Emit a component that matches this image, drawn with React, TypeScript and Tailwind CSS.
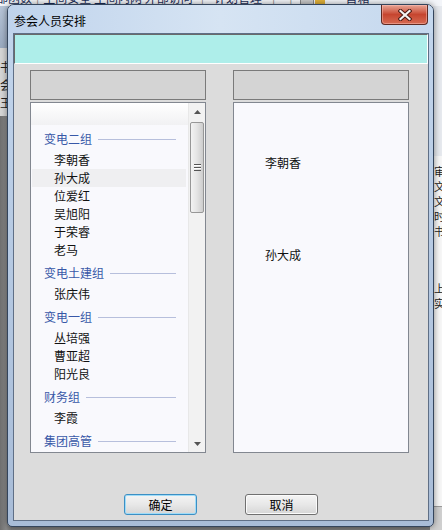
import React from "react";

function Group({ name }: { name: string }) {
  return (
    <div className="h-[26px] shrink-0 flex items-center pt-[2px] pl-[13px] pr-[12px]">
      <span className="text-[#3858a8] whitespace-nowrap">{name}</span>
      <div className="ml-[6px] flex-1 h-px bg-[#b7bfdc]" />
    </div>
  );
}

function Item({ name, hl }: { name: string; hl?: boolean }) {
  return (
    <div
      className={
        "h-[18px] shrink-0 flex items-center ml-[1px] mr-[2px] pl-[22px] text-[#111] " +
        (hl ? "bg-[#efeff1]" : "")
      }
    >
      {name}
    </div>
  );
}

function Arrow({ down }: { down?: boolean }) {
  return (
    <div className="h-[17px] shrink-0 flex items-center justify-center">
      <svg width="7" height="4" viewBox="0 0 7 4">
        {down ? (
          <path d="M0 0 H7 L3.5 4 Z" fill="#555" />
        ) : (
          <path d="M0 4 H7 L3.5 0 Z" fill="#555" />
        )}
      </svg>
    </div>
  );
}

function Scrollbar() {
  return (
    <div className="w-[17px] shrink-0 flex flex-col bg-[#f2f2f2] border-l border-[#e8e8e8]">
      <Arrow />
      <div className="mt-[2px] mx-[1px] h-[91px] rounded-[2px] border border-[#979797] bg-gradient-to-r from-[#f3f3f3] via-[#e4e4e4] to-[#cdcdcd] flex items-center justify-center">
        <svg width="7" height="7" viewBox="0 0 7 7">
          <rect x="0" y="0" width="7" height="1" fill="#555" />
          <rect x="0" y="1" width="7" height="1" fill="#fff" />
          <rect x="0" y="3" width="7" height="1" fill="#555" />
          <rect x="0" y="4" width="7" height="1" fill="#fff" />
          <rect x="0" y="6" width="7" height="1" fill="#555" />
        </svg>
      </div>
      <div className="flex-1" />
      <Arrow down />
    </div>
  );
}

function CloseButton() {
  return (
    <div className="mr-[5px] w-[47px] h-[20px] rounded-b-[4px] border border-t-0 border-[#5e2a22] bg-gradient-to-b from-[#e7a495] via-[#c6452f] to-[#d66a52] flex items-center justify-center shadow-[inset_0_0_0_1px_rgba(255,200,190,0.45)]">
      <svg width="14" height="12" viewBox="0 0 14 12">
        <path d="M2.5 2 L11.5 10 M11.5 2 L2.5 10" stroke="#4a1a14" strokeWidth="4.2" strokeLinecap="square" />
        <path d="M2.5 2 L11.5 10 M11.5 2 L2.5 10" stroke="#f4f4f4" strokeWidth="2.2" strokeLinecap="square" />
      </svg>
    </div>
  );
}

function Background() {
  return (
    <>
      <div className="absolute left-0 top-0 w-[442px] h-[6px] overflow-hidden bg-[#f3f5f9]">
        <div className="flex items-start whitespace-nowrap -mt-[9px] text-[12px] leading-[14px] text-[#1d2f5a]">
          <span className="-ml-[4px]">部函数</span>
          <span className="ml-[4px] text-[#888]">|</span>
          <span className="ml-[4px]">生间安全 生间内网 外部访问</span>
          <span className="ml-[8px] text-[#888]">|</span>
          <span className="ml-[10px]">计划管理</span>
          <span className="ml-[10px] text-[#888]">|</span>
          <span className="ml-[14px] text-[#888]">|</span>
          <span className="ml-[8px] w-[14px] h-[14px] bg-[#c9c9c9] border border-[#888]" />
          <span className="ml-[1px] w-[10px] h-[14px] bg-[#e2b23a]" />
          <span className="ml-[20px]">首箱</span>
        </div>
      </div>
      <div className="absolute left-0 top-[6px] w-[12px] h-[524px] flex flex-col">
        <div className="h-[42px] bg-gradient-to-b from-[#b7c5d8] to-[#9aaac0]" />
        <div className="h-[68px] bg-[#d6d6d6] flex flex-col pt-[10px] text-[12px] leading-[18px] text-[#222]">
          <span>书</span>
          <span>会</span>
          <span>王</span>
        </div>
        <div className="flex-1 bg-gradient-to-r from-[#6f6f6f] via-[#8a8a8a] to-[#777]" />
      </div>
      <div className="absolute right-0 top-[6px] w-[12px] h-[524px] flex flex-col bg-[#f6f6f6]">
        <div className="h-[150px] bg-[#e6e9ee]" />
        <div className="flex flex-col pl-[4px] pt-[8px] text-[11px] leading-[15px] text-[#222]">
          <span>审</span>
          <span>文</span>
          <span>文</span>
          <span>时</span>
          <span>书</span>
          <span className="mt-[42px]">上</span>
          <span>实</span>
        </div>
        <div className="flex-1" />
        <div className="h-[24px] bg-[#cfcfcf] border-t border-[#9a9a9a]" />
      </div>
    </>
  );
}

export default function App() {
  return (
    <div className="relative w-[442px] h-[530px] overflow-hidden bg-[#7b7b7b] font-['Noto_Sans_CJK_SC',sans-serif] text-[12px] leading-[16px]">
      <Background />
      <div className="absolute left-[7px] top-[4px] w-[427px] h-[523px] rounded-t-[7px] rounded-b-[5px] border border-[#34455c] bg-gradient-to-b from-[#c3d6ed] to-[#a8bcd7] shadow-[0_0_6px_rgba(0,0,0,0.45)] flex flex-col">
        <div className="h-[28px] shrink-0 flex items-start justify-between bg-gradient-to-r from-[#bfd3ec] via-[#d6e4f3] to-[#c5d8ee] rounded-t-[6px]">
          <span className="ml-[6px] mt-[8px] text-black">参会人员安排</span>
          <CloseButton />
        </div>
        <div className="ml-[5px] w-[416px] h-[488px] shrink-0 border border-[#5f6f86] bg-[#dcdcdc] flex flex-col">
          <div className="h-[30px] shrink-0 border border-[#6a6a6a] border-b-white border-r-white bg-[#aeeeea]" />
          <div className="mt-[6px] flex pl-[16px] gap-[27px]">
            <div className="w-[176px] flex flex-col">
              <div className="h-[30px] border border-[#7a7a7a] bg-[#d4d4d4]" />
              <div className="mt-[2px] h-[351px] border border-[#828790] bg-[#f9f9fd] flex overflow-hidden">
                <div className="flex-1 flex flex-col overflow-hidden">
                  <div className="h-[22px] shrink-0 bg-gradient-to-b from-white to-[#f1f1f3]" />
                  <Group name="变电二组" />
                  <Item name="李朝香" />
                  <Item name="孙大成" hl />
                  <Item name="位爱红" />
                  <Item name="吴旭阳" />
                  <Item name="于荣睿" />
                  <Item name="老马" />
                  <Group name="变电土建组" />
                  <Item name="张庆伟" />
                  <Group name="变电一组" />
                  <Item name="丛培强" />
                  <Item name="曹亚超" />
                  <Item name="阳光良" />
                  <Group name="财务组" />
                  <Item name="李霞" />
                  <Group name="集团高管" />
                </div>
                <Scrollbar />
              </div>
            </div>
            <div className="w-[176px] flex flex-col">
              <div className="h-[30px] border border-[#7a7a7a] bg-[#d4d4d4]" />
              <div className="mt-[2px] h-[351px] border border-[#828790] bg-[#f9f9fd] flex flex-col pl-[31px] text-[#111]">
                <span className="mt-[52px]">李朝香</span>
                <span className="mt-[76px]">孙大成</span>
              </div>
            </div>
          </div>
          <div className="mt-[41px] flex pl-[110px] gap-[48px]">
            <button className="w-[73px] h-[21px] rounded-[3px] border border-[#3c8fc4] shadow-[inset_0_0_0_1px_#9fdcf8] bg-gradient-to-b from-[#f4f4f4] via-[#e8e8e8] to-[#d6d6d6] flex items-center justify-center text-black">
              确定
            </button>
            <button className="w-[73px] h-[21px] rounded-[3px] border border-[#707070] shadow-[inset_0_0_0_1px_#fbfbfb] bg-gradient-to-b from-[#f4f4f4] via-[#e8e8e8] to-[#d6d6d6] flex items-center justify-center text-black">
              取消
            </button>
          </div>
        </div>
      </div>
    </div>
  );
}
